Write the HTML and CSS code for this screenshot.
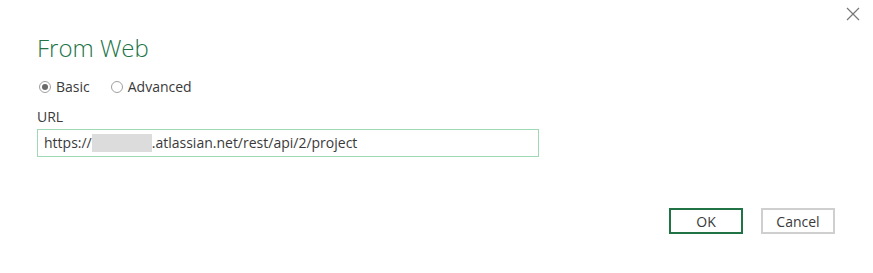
FILE: index.html
```html
<!DOCTYPE html>
<html lang="en">
<head>
    <meta charset="UTF-8">
    <title>From Web</title>
    <link rel="stylesheet" href="styles.css">
</head>
<body>
    <div class="dialog">
        <button class="close" title="Close">
            <svg width="14" height="14" viewBox="0 0 14 14"><path d="M1 1L13 13M13 1L1 13" stroke="#777" stroke-width="1.2" fill="none"/></svg>
        </button>

        <h1 class="title">From Web</h1>

        <div class="modes">
            <label class="radio"><span class="dot checked"></span>Basic</label>
            <label class="radio"><span class="dot"></span>Advanced</label>
        </div>

        <div class="field">
            <div class="label">URL</div>
            <div class="input">https://<span class="blur"></span>.atlassian.net/rest/api/2/project</div>
        </div>

        <div class="actions">
            <button class="btn primary">OK</button>
            <button class="btn">Cancel</button>
        </div>
    </div>
</body>
</html>
```

FILE: styles.css
```css
body {
    margin: 0;
    padding: 0;
    background: #fff;
    font-family: "Open Sans", Arial, sans-serif;
    color: #3a3a3a;
}

.dialog {
    position: relative;
    width: 873px;
    height: 273px;
    padding: 0 37px;
    box-sizing: border-box;
}

.close {
    position: absolute;
    top: 7px;
    right: 13px;
    border: 0;
    background: none;
    padding: 0;
    width: 14px;
    height: 14px;
}

.title {
    margin: 0;
    padding-top: 33px;
    font-size: 24px;
    line-height: 30px;
    font-weight: 300;
    color: #217346;
}

.modes {
    display: flex;
    align-items: center;
    gap: 21px;
    margin-top: 14px;
    padding-left: 2px;
    font-size: 14px;
    line-height: 20px;
}

.radio {
    display: flex;
    align-items: center;
    gap: 5px;
}

.dot {
    width: 12px;
    height: 12px;
    border: 1px solid #a0a0a0;
    border-radius: 50%;
    box-sizing: border-box;
    position: relative;
}

.dot.checked::after {
    content: "";
    position: absolute;
    left: 2px;
    top: 2px;
    width: 6px;
    height: 6px;
    border-radius: 50%;
    background: #6a6a6a;
}

.field {
    margin-top: 10px;
    font-size: 14px;
}

.label {
    line-height: 20px;
}

.input {
    margin-top: 2px;
    width: 502px;
    height: 28px;
    box-sizing: border-box;
    border: 1px solid #9fd8b4;
    padding: 0 6px;
    line-height: 26px;
    display: flex;
    align-items: center;
}

.blur {
    display: inline-block;
    width: 60px;
    height: 18px;
    background: #dcdcdc;
}

.actions {
    display: flex;
    justify-content: flex-end;
    gap: 18px;
    margin-top: 51px;
    padding-right: 1px;
}

.btn {
    width: 74px;
    height: 26px;
    border: 2px solid #cfcfcf;
    background: #fff;
    font-family: inherit;
    font-size: 14px;
    color: #3a3a3a;
    padding: 0;
}

.btn.primary {
    border-color: #217346;
}
```
